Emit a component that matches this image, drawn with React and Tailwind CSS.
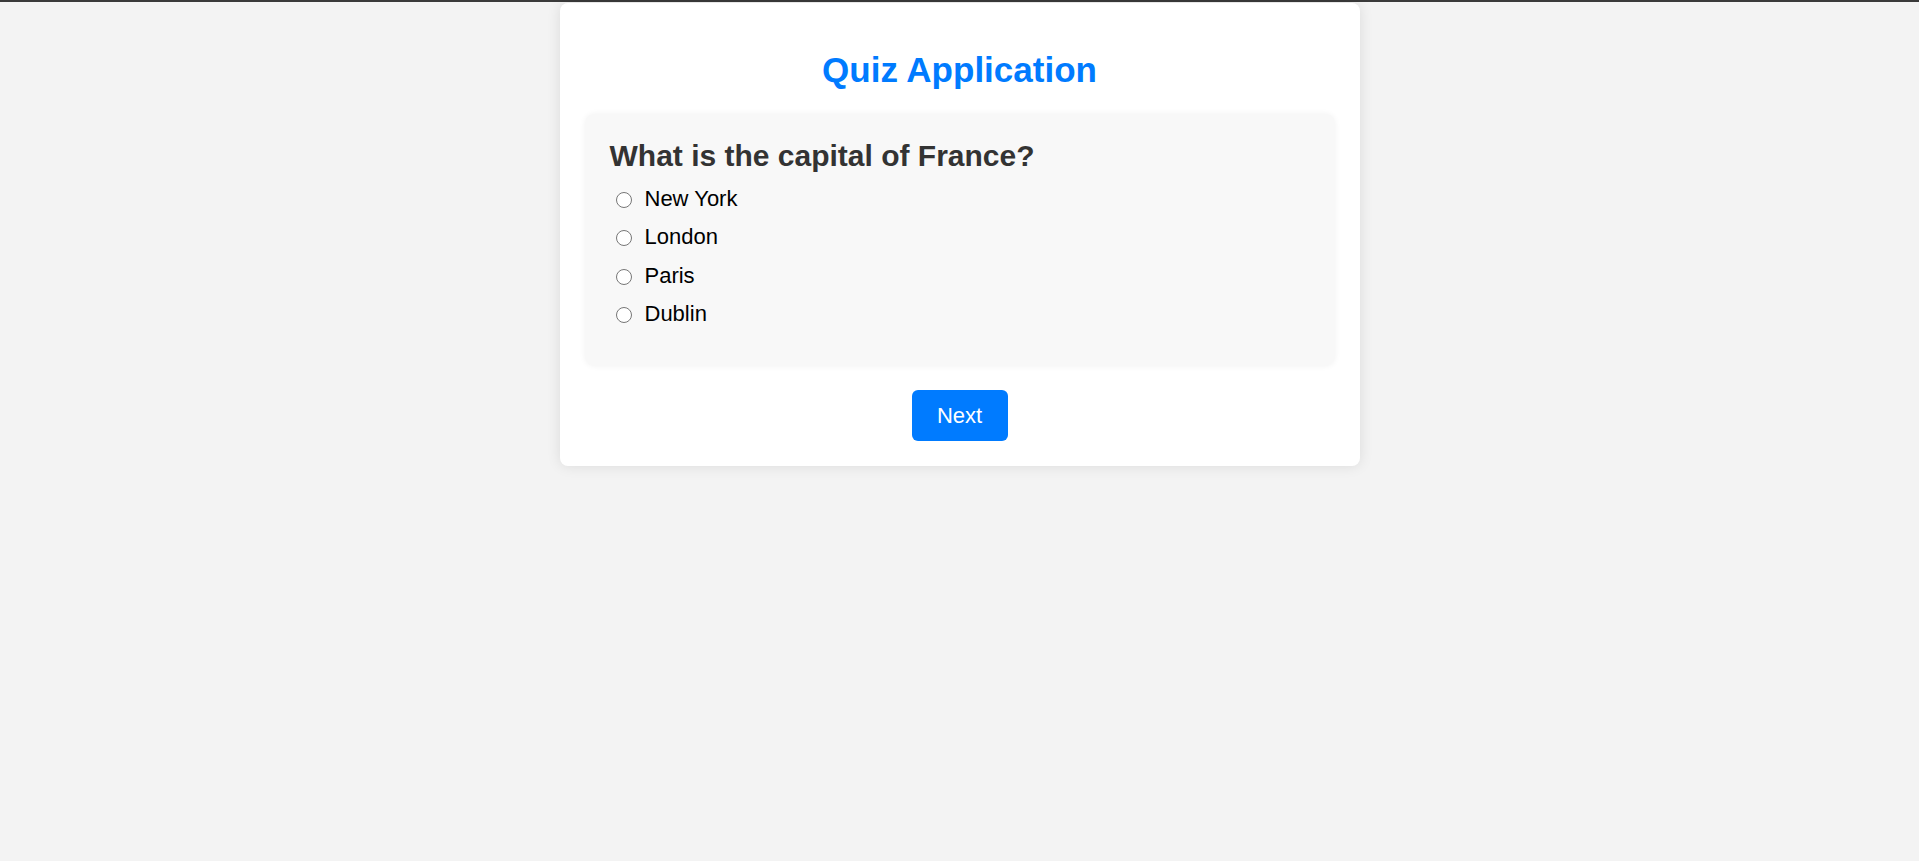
import React, { useState } from 'react';

const question = {
  text: 'What is the capital of France?',
  options: ['New York', 'London', 'Paris', 'Dublin'],
};

const App = () => {
  const [selected, setSelected] = useState(null);

  return (
    <div className="min-h-screen bg-[#f3f3f3] font-['Liberation_Sans',Arial,sans-serif]">
      <div className="h-[2px] bg-[#3a3a3a]"></div>

      <div className="mx-auto mt-[1px] w-[800px] bg-white rounded-[8px] shadow-[0_0_14px_rgba(0,0,0,0.1)] px-[25px] pt-[47px] pb-[25px]">
        <h1 className="text-center text-[35px] leading-[40px] font-bold text-[#007bff] mb-[24px]">
          Quiz Application
        </h1>

        {/* Question */}
        <div className="bg-[#f8f8f8] rounded-[10px] shadow-[0_0_6px_rgba(0,0,0,0.06)] pt-[25px] px-[25px] pb-[40px]">
          <h2 className="text-[30px] leading-[34.5px] font-bold text-[#333333]">
            {question.text}
          </h2>
          <div className="mt-[12.5px] flex flex-col gap-[13px]">
            {question.options.map(option => (
              <label key={option} className="flex items-center h-[25.3px] text-[22px] leading-[25.3px] text-black cursor-pointer">
                <input
                  type="radio"
                  name="answer"
                  checked={selected === option}
                  onChange={() => setSelected(option)}
                  className="w-[16px] h-[16px] m-0 ml-[6px] mr-[13px] mt-[3px]"
                />
                <span>{option}</span>
              </label>
            ))}
          </div>
        </div>

        <div className="mt-[24px] flex justify-center">
          <button className="w-[96px] h-[51px] rounded-[6px] bg-[#007bff] text-white text-[22px] leading-[25px]">
            Next
          </button>
        </div>
      </div>
    </div>
  );
};

export default App;
